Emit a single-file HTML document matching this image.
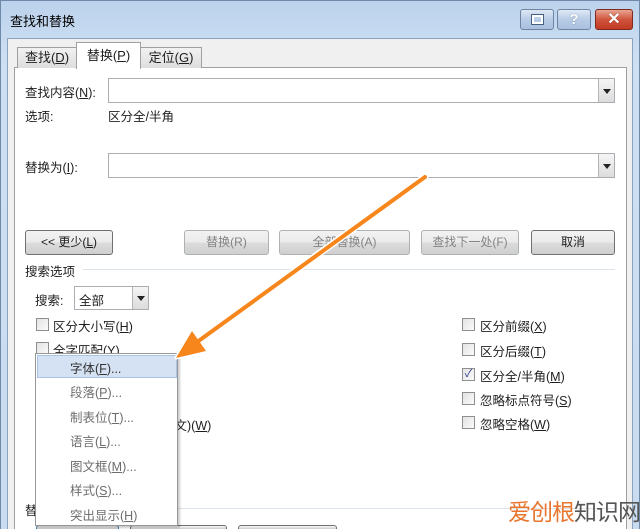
<!DOCTYPE html>
<html style="width:640px;height:529px;overflow:hidden"><head><meta charset="utf-8"><style>
*{margin:0;padding:0;box-sizing:border-box}
body{width:640px;height:529px;overflow:hidden;position:relative;background:#c9dbef;font-family:"Liberation Sans","Noto Sans CJK SC",sans-serif;font-size:12px;color:#1e1e1e}
.a{position:absolute}
.u{text-decoration:underline}
.frame{left:0;top:0;width:640px;height:529px;background:linear-gradient(#bcd2ec,#cddff2 60px,#c8dbf0);border:1px solid #6f8aa8;border-bottom:none}
.client{left:7px;top:38px;width:626px;height:491px;background:#f0f0f0;border:1px solid #8da2bd;border-bottom:none}
.tb{top:9px;height:21px;border:1px solid #6d84a3;border-radius:3px;background:linear-gradient(#dfe9f6,#b8cce6 50%,#a9c0de)}
.panel{left:14px;top:67px;width:613px;height:462px;background:#fff;border:1px solid #a0a0a0;border-bottom:none}
.tab{top:47px;height:21px;border:1px solid #a0a0a0;border-bottom:none;background:linear-gradient(#f2f2f2,#dedede);text-align:center;line-height:20px;font-size:13px}
.cb{height:25px;border:1px solid #abadb3;background:#fff}
.dd{width:16px;border-left:1px solid #b5b5b5;background:linear-gradient(#f5f5f5,#dcdcdc);}
.dd:after{content:"";position:absolute;left:4px;top:50%;margin-top:-2px;border-left:4px solid transparent;border-right:4px solid transparent;border-top:5px solid #222}
.btn{top:230px;height:25px;border:1px solid #707070;border-radius:3px;background:linear-gradient(#f2f2f2,#ebebeb 50%,#dcdcdc 51%,#cfcfcf);text-align:center;line-height:23px;font-size:12px}
.dis{color:#838383;border-color:#adb2b5}
.chk{width:13px;height:13px;border:1px solid #8e8f8f;background:linear-gradient(135deg,#e3e3e3,#fafafa)}
.lbl{font-size:12.5px}
.menu{left:35px;top:353px;width:143px;height:173px;background:#fff;border:1px solid #979797;box-shadow:2px 2px 2px rgba(0,0,0,.2)}
.mi{left:34px;font-size:12.5px;color:#6d6d6d}
</style></head><body>
<div class="a frame"></div>
<div class="a" style="left:10px;top:11px;font-size:13px;color:#000">查找和替换</div>
<div class="a tb" style="left:520px;width:34px"><div class="a" style="left:11px;top:5px;width:11px;height:9px;border:2px solid #fff;outline:1px solid #45607f"></div></div>
<div class="a tb" style="left:557px;width:34px;color:#fff;font-weight:bold;font-size:15px;text-align:center;line-height:19px;text-shadow:0 0 1px #45607f">?</div>
<div class="a tb" style="left:595px;width:38px;background:linear-gradient(#e8a493,#d0553c 50%,#c23a22);border-color:#7e2b1d;color:#fff;font-weight:bold;font-size:16px;text-align:center;line-height:19px;text-shadow:0 0 1px #5a1a10">✕</div>
<div class="a client"></div>
<div class="a panel"></div>
<div class="a tab" style="left:17px;width:60px">查找(<span class="u">D</span>)</div>
<div class="a tab" style="left:140px;width:62px">定位(<span class="u">G</span>)</div>
<div class="a tab" style="left:76px;top:42px;width:65px;height:27px;background:#fff;line-height:26px">替换(<span class="u">P</span>)</div>
<div class="a lbl" style="left:25px;top:82px">查找内容(<span class="u">N</span>):</div>
<div class="a cb" style="left:108px;top:78px;width:507px"><div class="a dd" style="right:0;top:0;height:23px"></div></div>
<div class="a lbl" style="left:25px;top:106px">选项:</div>
<div class="a lbl" style="left:108px;top:106px">区分全/半角</div>
<div class="a lbl" style="left:25px;top:157px">替换为(<span class="u">I</span>):</div>
<div class="a cb" style="left:108px;top:153px;width:507px"><div class="a dd" style="right:0;top:0;height:23px"></div></div>
<div class="a btn" style="left:25px;width:88px">&lt;&lt; 更少(<span class="u">L</span>)</div>
<div class="a btn dis" style="left:184px;width:85px">替换(R)</div>
<div class="a btn dis" style="left:279px;width:131px">全部替换(A)</div>
<div class="a btn dis" style="left:421px;width:98px">查找下一处(F)</div>
<div class="a btn" style="left:531px;width:84px">取消</div>
<div class="a lbl" style="left:25px;top:261px">搜索选项</div>
<div class="a" style="left:83px;top:269px;width:532px;height:1px;background:#dde3ea"></div>
<div class="a lbl" style="left:35px;top:290px">搜索:</div>
<div class="a cb" style="left:74px;top:286px;width:75px;height:24px"><div class="a lbl" style="left:4px;top:3px">全部</div><div class="a dd" style="right:0;top:0;height:22px"></div></div>
<div class="a chk" style="left:36px;top:318px"></div><div class="a lbl" style="left:53px;top:316px">区分大小写(<span class="u">H</span>)</div>
<div class="a chk" style="left:36px;top:342px"></div><div class="a lbl" style="left:53px;top:340px">全字匹配(<span class="u">Y</span>)</div>
<div class="a lbl" style="left:162px;top:415px">英文)(<span class="u">W</span>)</div>
<div class="a chk" style="left:462px;top:318px"></div><div class="a lbl" style="left:480px;top:316px">区分前缀(<span class="u">X</span>)</div>
<div class="a chk" style="left:462px;top:343px"></div><div class="a lbl" style="left:480px;top:341px">区分后缀(<span class="u">T</span>)</div>
<div class="a chk" style="left:462px;top:368px;font-size:11px;line-height:11px;color:#2a3d86;text-align:center">✓</div><div class="a lbl" style="left:480px;top:366px">区分全/半角(<span class="u">M</span>)</div>
<div class="a chk" style="left:462px;top:392px"></div><div class="a lbl" style="left:480px;top:390px">忽略标点符号(<span class="u">S</span>)</div>
<div class="a chk" style="left:462px;top:416px"></div><div class="a lbl" style="left:480px;top:414px">忽略空格(<span class="u">W</span>)</div>
<div class="a lbl" style="left:25px;top:500px">替</div>
<div class="a" style="left:178px;top:508px;width:437px;height:1px;background:#dde3ea"></div>
<div class="a btn" style="left:36px;top:525px;width:83px;height:4px;border-color:#3c7fb1;border-bottom:none;border-radius:3px 3px 0 0"></div>
<div class="a btn" style="left:130px;top:525px;width:97px;height:4px;border-bottom:none;border-radius:3px 3px 0 0"></div>
<div class="a btn" style="left:238px;top:525px;width:99px;height:4px;border-bottom:none;border-radius:3px 3px 0 0"></div>
<div class="a menu">
<div class="a" style="left:1px;top:1px;width:140px;height:23px;background:#d5e2f3;border:1px solid #a9c4e7"></div>
<div class="a mi" style="top:4px;color:#333">字体(<span class="u">F</span>)...</div>
<div class="a mi" style="top:28px">段落(<span class="u">P</span>)...</div>
<div class="a mi" style="top:53px">制表位(<span class="u">T</span>)...</div>
<div class="a mi" style="top:77px">语言(<span class="u">L</span>)...</div>
<div class="a mi" style="top:102px">图文框(<span class="u">M</span>)...</div>
<div class="a mi" style="top:126px">样式(<span class="u">S</span>)...</div>
<div class="a mi" style="top:151px">突出显示(<span class="u">H</span>)</div>
</div>
<svg class="a" style="left:0;top:0" width="640" height="529">
<g stroke="#fff" stroke-width="7" stroke-linecap="round" fill="none"><line x1="425" y1="177" x2="195" y2="343"/></g>
<polygon points="176,358 191,330 207,351" fill="#fff" stroke="#fff" stroke-width="3" stroke-linejoin="round"/>
<line x1="425" y1="177" x2="193" y2="345" stroke="#f7861c" stroke-width="4" stroke-linecap="round"/>
<polygon points="176,358 192,331 206,351" fill="#f7861c"/>
</svg>
<div class="a" style="left:508px;top:498px;font-size:23px;line-height:28px;letter-spacing:-1px;white-space:nowrap"><span style="color:#e8762d">爱创根</span><span style="color:#555">知识网</span></div>
</body></html>
